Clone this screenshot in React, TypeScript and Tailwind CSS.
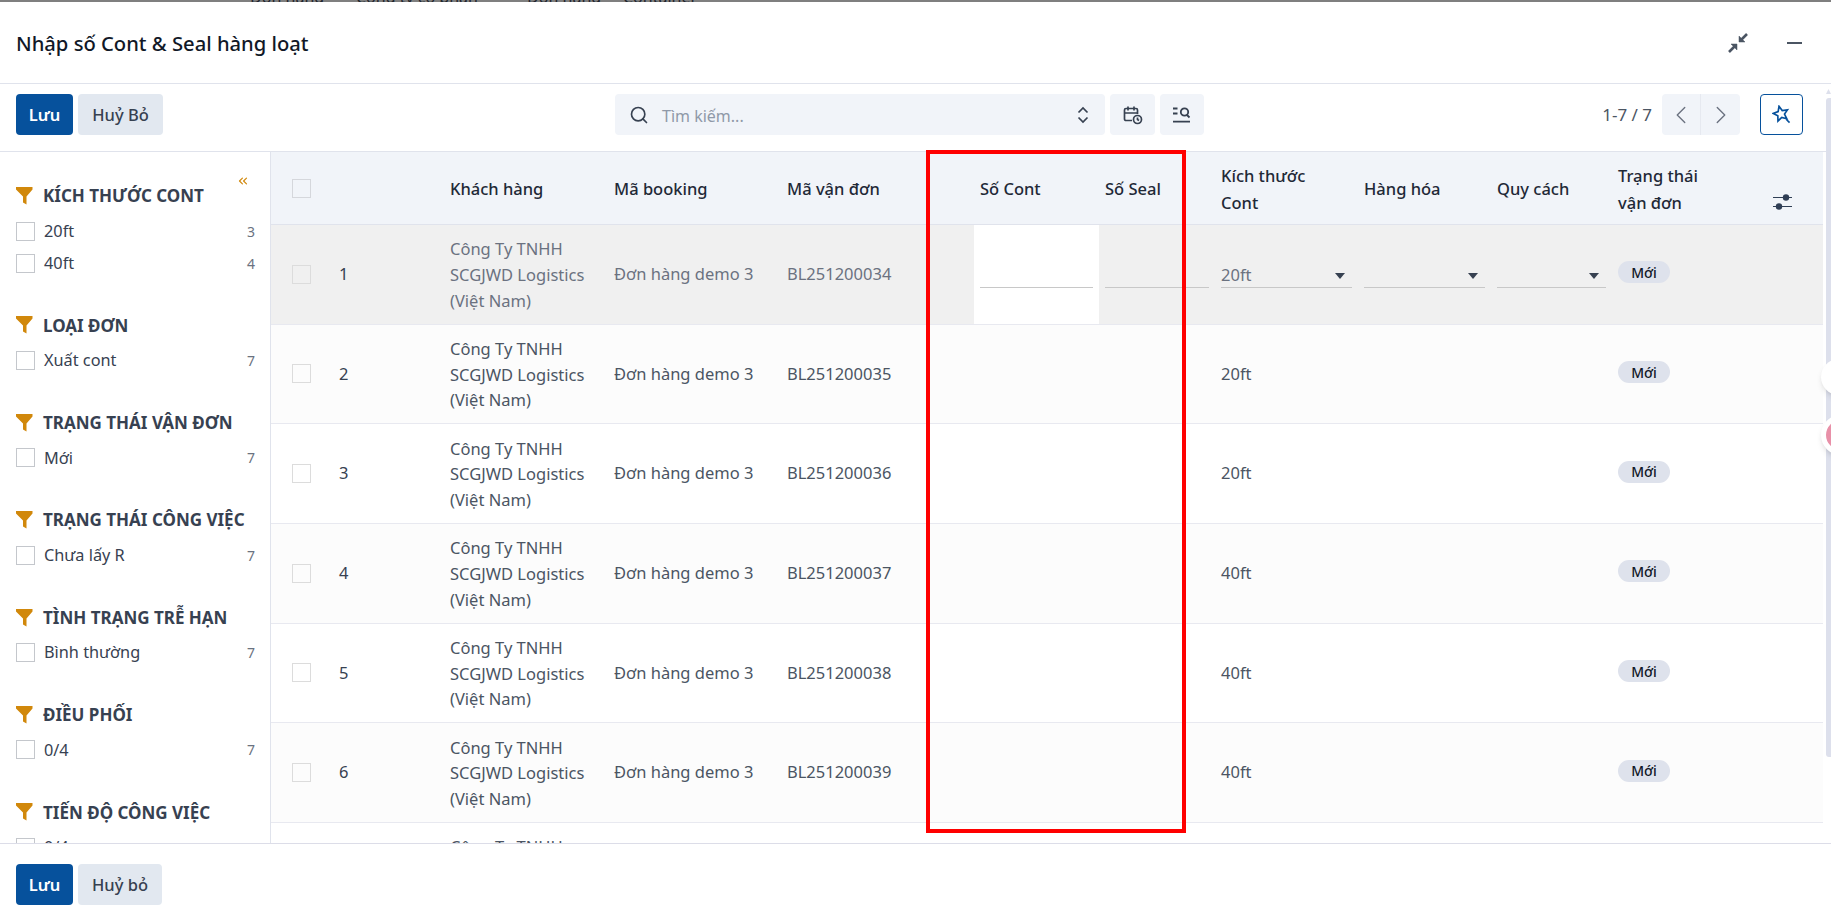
import { ChevronLeft, ChevronRight, ChevronsLeft, Search } from "lucide-react";

const cols =
  "grid grid-cols-[63px_110px_164px_173px_193px_125px_116px_143px_133px_121px_211px]";

const filters = [
  { title: "KÍCH THƯỚC CONT", items: [["20ft", "3"], ["40ft", "4"]] },
  { title: "LOẠI ĐƠN", items: [["Xuất cont", "7"]] },
  { title: "TRẠNG THÁI VẬN ĐƠN", items: [["Mới", "7"]] },
  { title: "TRẠNG THÁI CÔNG VIỆC", items: [["Chưa lấy R", "7"]] },
  { title: "TÌNH TRẠNG TRỄ HẠN", items: [["Bình thường", "7"]] },
  { title: "ĐIỀU PHỐI", items: [["0/4", "7"]] },
  { title: "TIẾN ĐỘ CÔNG VIỆC", items: [["0/4", "7"]] },
];

const rows = [
  { no: 1, bl: "BL251200034", size: "20ft" },
  { no: 2, bl: "BL251200035", size: "20ft" },
  { no: 3, bl: "BL251200036", size: "20ft" },
  { no: 4, bl: "BL251200037", size: "40ft" },
  { no: 5, bl: "BL251200038", size: "40ft" },
  { no: 6, bl: "BL251200039", size: "40ft" },
  { no: 7, bl: "BL251200040", size: "40ft" },
];

function Funnel() {
  return (
    <svg width="17" height="18" viewBox="0 0 17 18" className="shrink-0">
      <path d="M0 0h16.500v2.500L10.500 9.500V17.500L7 15.500V9.500L0 2.500z" fill="#d1880b" />
    </svg>
  );
}

function Caret() {
  return (
    <svg width="10" height="6" viewBox="0 0 10 6" className="shrink-0">
      <path d="M0 0h10L5 6z" fill="#374151" />
    </svg>
  );
}

function Badge() {
  return (
    <span className="inline-flex h-[22px] w-[52px] items-center justify-center rounded-full bg-[#dee2ec] text-[14px] font-medium text-[#111827]">
      Mới
    </span>
  );
}

function Sidebar() {
  return (
    <aside className="relative h-full w-[271px] shrink-0 overflow-hidden border-r border-[#e0e3ec] pl-4 pr-[15px] pt-[35px]">
      <ChevronsLeft size={14} className="absolute left-[236px] top-[22px] text-[#d1880b]" />
      <div className="flex flex-col gap-[37.4px]">
        {filters.map((f) => (
          <section key={f.title}>
            <h3 className="flex h-[18px] items-center gap-[10px] text-[17px] font-bold text-[#374151]">
              <Funnel />
              {f.title}
            </h3>
            <div className="mt-[10px] flex flex-col">
              {f.items.map(([label, count]) => (
                <div key={label} className="flex h-[32px] items-center">
                  <span className="h-[19px] w-[19px] border border-[#c4c7cc] bg-white" />
                  <span className="ml-[9px] flex-1 text-[16.3px] text-[#374151]">{label}</span>
                  <span className="text-[14px] text-[#6b7280]">{count}</span>
                </div>
              ))}
            </div>
          </section>
        ))}
      </div>
    </aside>
  );
}

function Row({ no, bl, size }: { no: number; bl: string; size: string }) {
  const active = no === 1;
  const bg = active ? "bg-[#f0f0f0]" : no % 2 === 0 ? "bg-[#fcfcfc]" : "bg-white";
  const tone = active ? "text-[#6b7280]" : "text-[#4b5563]";
  return (
    <div className={`${cols} h-[99.67px] items-center border-b border-[#e8e9f0] text-[16.5px] ${tone} ${bg}`}>
      <div className="pl-[21px]">
        <span className="block h-[19px] w-[19px] border border-[#dcdcdc]" />
      </div>
      <div className="pl-[5px] text-[#374151]">{no}</div>
      <div className="px-[6px] pt-[1px] leading-[25.7px]">
        Công Ty TNHH SCGJWD Logistics (Việt Nam)
      </div>
      <div className="px-[6px]">Đơn hàng demo 3</div>
      <div className="px-[6px]">{bl}</div>
      {active ? (
        <>
          <div className="h-full bg-white px-[6px] pt-[62px]">
            <div className="h-[1px] bg-[#c8c8c8]" />
          </div>
          <div className="h-full pl-[6px] pr-[6px] pt-[62px]">
            <div className="h-[1px] bg-[#c8c8c8]" />
          </div>
          <div className="h-full px-[6px] pt-[37px]">
            <div className="flex h-[26px] items-center justify-between border-b border-[#c8c8c8] pr-[7px] pt-[2px]">
              {size}
              <Caret />
            </div>
          </div>
          <div className="h-full px-[6px] pt-[37px]">
            <div className="flex h-[26px] items-center justify-end border-b border-[#c8c8c8] pr-[7px] pt-[2px]">
              <Caret />
            </div>
          </div>
          <div className="h-full px-[6px] pt-[37px]">
            <div className="flex h-[26px] items-center justify-end border-b border-[#c8c8c8] pr-[7px] pt-[2px]">
              <Caret />
            </div>
          </div>
        </>
      ) : (
        <>
          <div />
          <div />
          <div className="px-[6px]">{size}</div>
          <div />
          <div />
        </>
      )}
      <div className="-mt-[4px] px-[6px]">
        <Badge />
      </div>
    </div>
  );
}

export default function App() {
  return (
    <div className="relative h-[924px] w-[1831px] overflow-hidden bg-white font-['Noto_Sans',sans-serif] text-[#374151]">
      {/* sliver of the page behind the dialog, only the feet of its text show */}
      <div className="flex h-[2px] items-end overflow-hidden bg-[#7f7f7f] text-[16px] leading-[16px] text-[#20242c]">
        <span className="-mb-[3px] ml-[250px] w-[106px] shrink-0">Đơn hàng</span>
        <span className="-mb-[3px] w-[171px] shrink-0">Công ty cổ phần</span>
        <span className="-mb-[3px] w-[96px] shrink-0">Đơn hàng</span>
        <span className="-mb-[3px] shrink-0">Container</span>
      </div>

      <header className="flex h-[82px] items-center justify-between border-b border-[#e0e3ec] pl-4 pr-[29px]">
        <h1 className="pt-[2px] text-[20.2px] font-medium text-[#111827]">Nhập số Cont &amp; Seal hàng loạt</h1>
        <div className="flex items-center gap-[39px]">
          <svg width="20" height="20" viewBox="0 0 20 20" fill="#4b5563" stroke="#4b5563">
            <path d="M11 3v6h6z" strokeWidth="0.500" />
            <path d="M9 17v-6H3z" strokeWidth="0.500" />
            <path d="M13.500 6.500 19 1M6.500 13.500 1 19" strokeWidth="2.600" fill="none" />
          </svg>
          <div className="h-[2px] w-[15px] bg-[#4b5563]" />
        </div>
      </header>

      <div className="flex h-[68px] items-start border-b border-[#e0e3ec] pl-4 pr-[28px] pt-[10px]">
        <div className="flex w-[599px] gap-[5px]">
          <button className="h-[41px] w-[57px] rounded-[4px] bg-[#06519c] pt-[2px] text-[16.5px] font-semibold text-white">Lưu</button>
          <button className="h-[41px] w-[85px] rounded-[4px] bg-[#e2e8f0] pt-[2px] text-[16.5px] font-medium text-[#374151]">Huỷ Bỏ</button>
        </div>
        <div className="flex h-[41px] w-[490px] items-center rounded-[4px] bg-[#f1f4f9] pl-[14px] pr-[16px]">
          <Search size={20} className="text-[#374151]" />
          <span className="ml-[13px] flex-1 pt-[2px] text-[16px] text-[#8f99a8]">Tìm kiếm...</span>
          <svg width="12" height="18" viewBox="0 0 12 18" fill="none" stroke="#374151" strokeWidth="1.700">
            <path d="M1.500 6.500 6 2l4.500 4.500M1.500 11.500 6 16l4.500-4.500" />
          </svg>
        </div>
        <button className="ml-[5px] flex h-[41px] w-[45px] items-center justify-center rounded-[4px] bg-[#f1f4f9]">
          <svg width="20" height="20" viewBox="0 0 20 20" fill="none" stroke="#374151" strokeWidth="1.700">
            <path d="M9 15.500H3a1.500 1.500 0 0 1-1.500-1.500V5A1.500 1.500 0 0 1 3 3.500h10A1.500 1.500 0 0 1 14.500 5v4M1.500 8h13M5 1.500v4M11 1.500v4" />
            <circle cx="14.500" cy="14.500" r="4" />
            <path d="M14.500 12.500v2l1.500 1" />
          </svg>
        </button>
        <button className="ml-[5px] flex h-[41px] w-[44px] items-center justify-center rounded-[4px] bg-[#f1f4f9]">
          <svg width="18" height="16" viewBox="0 0 18 16" fill="none" stroke="#374151" strokeWidth="1.800">
            <path d="M0 1.500h4.500M0 6.500h4.500M0 14.700h17" />
            <circle cx="11.500" cy="5" r="3.700" />
            <path d="m14 8 2.500 2.500" />
          </svg>
        </button>
        <div className="flex-1" />
        <span className="mt-[8px] text-[17px] text-[#4b5563]">1-7 / 7</span>
        <div className="ml-[10px] flex h-[41px] w-[78px] rounded-[4px] bg-[#f1f4f9] text-[#6b7280]">
          <div className="flex w-[39px] items-center justify-center border-r border-[#e6e9f0]">
            <ChevronLeft size={30} strokeWidth={1.100} />
          </div>
          <div className="flex w-[39px] items-center justify-center">
            <ChevronRight size={30} strokeWidth={1.100} />
          </div>
        </div>
        <button className="ml-[20px] flex h-[41px] w-[43px] items-center justify-center rounded-[4px] border border-[#06519c] bg-white">
          <svg width="20" height="20" viewBox="0 0 18 18" fill="none" stroke="#06519c" strokeWidth="1.500">
            <path transform="rotate(-14 8 8)" d="M8 1 9.900 5.400l4.700.5-3.500 3.100 1 4.600L8 11.300l-4.100 2.300 1-4.600L1.400 5.900l4.700-.5z" />
            <path d="m12.800 12.800 3 3" />
          </svg>
        </button>
      </div>

      <div className="flex h-[692px] border-b border-[#dcdde8]">
        <Sidebar />
        <main className="h-full w-[1552px] overflow-hidden">
          <div className={`${cols} h-[73px] items-center border-b border-[#e0e3ec] bg-[#f1f4f9] pt-[1px] text-[16.5px] font-medium leading-[27px] text-[#1f2937]`}>
            <div className="pl-[21px]">
              <span className="block h-[19px] w-[19px] border border-[#d5d7dc]" />
            </div>
            <div />
            <div className="pl-[6px]">Khách hàng</div>
            <div className="pl-[6px]">Mã booking</div>
            <div className="pl-[6px]">Mã vận đơn</div>
            <div className="pl-[6px]">Số Cont</div>
            <div className="pl-[6px]">Số Seal</div>
            <div className="pl-[6px]">Kích thước<br />Cont</div>
            <div className="pl-[6px]">Hàng hóa</div>
            <div className="pl-[6px]">Quy cách</div>
            <div className="relative pl-[6px]">
              Trạng thái<br />vận đơn
              <svg width="19" height="16" viewBox="0 0 19 16" className="absolute right-[31px] top-[32px]" fill="#2f3e55" stroke="#2f3e55" strokeWidth="1.100">
                <path d="M0 3.500h19M0 12.500h19" />
                <circle cx="13" cy="3.500" r="3.200" stroke="none" />
                <circle cx="6" cy="12.500" r="3.200" stroke="none" />
              </svg>
            </div>
          </div>
          {rows.map((r) => (
            <Row key={r.no} {...r} />
          ))}
        </main>
      </div>

      <footer className="flex h-[80px] gap-[5px] pl-4 pt-[20px]">
        <button className="h-[41px] w-[57px] rounded-[4px] bg-[#06519c] pt-[2px] text-[16.5px] font-semibold text-white">Lưu</button>
        <button className="h-[41px] w-[84px] rounded-[4px] bg-[#e2e8f0] pt-[2px] text-[16.5px] font-medium text-[#374151]">Huỷ bỏ</button>
      </footer>

      {/* annotation drawn on the screenshot */}
      <div className="absolute left-[926px] top-[150px] h-[683px] w-[260px] border-[4px] border-[#ff0000]" />

      {/* page scrollbar */}
      <svg width="5" height="5" viewBox="0 0 5 5" className="absolute right-0 top-[89px]">
        <path d="M0 5 2.500 0 5 5z" fill="#dde0ec" />
      </svg>
      <div className="absolute right-0 top-[98px] h-[659px] w-[5px] rounded-l-[3px] bg-[#dde0ec]" />
      {/* floating widgets from the page behind */}
      <div className="absolute left-[1821px] top-[359px] h-[36px] w-[36px] rounded-full bg-white shadow-md" />
      <div className="absolute left-[1821px] top-[415px] h-[40px] w-[40px] rounded-full border-[5px] border-white bg-[#e890a8] shadow-md" />
    </div>
  );
}
